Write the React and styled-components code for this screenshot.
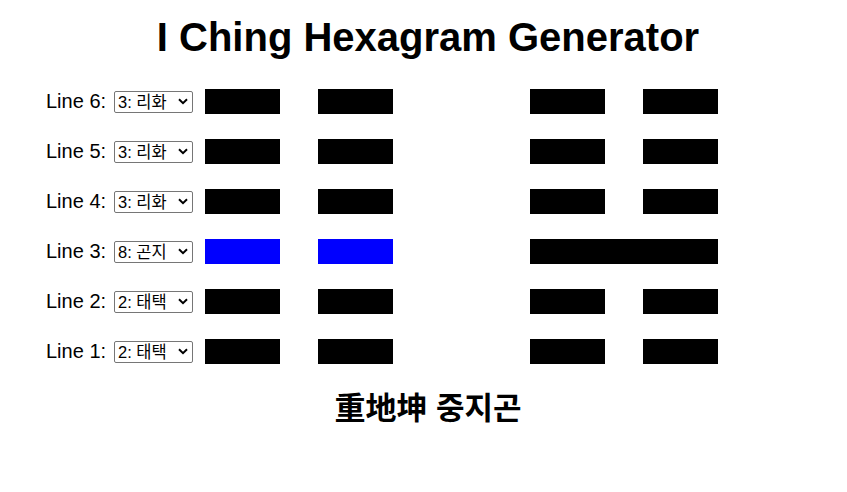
import React, { useState } from "react";
import styled, { createGlobalStyle } from "styled-components";

const Global = createGlobalStyle`
  html, body { margin: 0; padding: 0; background: #fff; }
  body { font-family: "Liberation Sans", Arial, "Noto Sans CJK KR", sans-serif; color: #000; }
`;

const chevron =
  "url(\"data:image/svg+xml;utf8,<svg xmlns='http://www.w3.org/2000/svg' width='10' height='7' viewBox='0 0 10 7'><path d='M1 1.2 L5 5.2 L9 1.2' fill='none' stroke='black' stroke-width='2'/></svg>\")";

const Page = styled.div`
  width: 847px;
  display: flex;
  flex-direction: column;
`;

const Title = styled.h1`
  margin: 14px 0 0 9px;
  font-size: 40px;
  line-height: 46px;
  font-weight: bold;
  text-align: center;
`;

const Rows = styled.div`
  display: flex;
  flex-direction: column;
  gap: 25px;
  margin: 29px 0 0 46px;
`;

const Row = styled.div`
  display: flex;
  align-items: center;
  height: 25px;
`;

const Label = styled.label`
  width: 68px;
  font-size: 20px;
  line-height: 23px;
  white-space: nowrap;
`;

const Select = styled.select`
  appearance: none;
  -webkit-appearance: none;
  width: 79px;
  height: 22px;
  font-family: "Liberation Sans", Arial, "Noto Sans CJK KR", sans-serif;
  font-size: 16.5px;
  line-height: 20px;
  padding: 0 0 0 3px;
  border: 1px solid #767676;
  border-radius: 2px;
  background: #fff ${chevron} no-repeat right 4px center / 10px 7px;
  color: #000;
  margin: 0 12px 0 0;
`;

const Hexagram = styled.div`
  display: flex;
  width: 188px;
  height: 25px;
  justify-content: space-between;
  margin-right: ${(p) => p.$gapRight || 0}px;
`;

const Bar = styled.div`
  height: 25px;
  width: ${(p) => (p.$solid ? 188 : 75)}px;
  background: ${(p) => (p.$changing ? "#0000ff" : "#000")};
`;

const Name = styled.h2`
  margin: 27px 0 0 9px;
  font-size: 31px;
  line-height: 36px;
  font-weight: bold;
  text-align: center;
  font-family: "Liberation Sans", Arial, "Noto Sans CJK KR", sans-serif;
`;

const trigramOptions = [
  "1: 건천",
  "2: 태택",
  "3: 리화",
  "4: 진뢰",
  "5: 손풍",
  "6: 감수",
  "7: 간산",
  "8: 곤지",
];

const initial = [
  { n: 6, v: "3: 리화", changing: false, solid: false },
  { n: 5, v: "3: 리화", changing: false, solid: false },
  { n: 4, v: "3: 리화", changing: false, solid: false },
  { n: 3, v: "8: 곤지", changing: true, solid: true },
  { n: 2, v: "2: 태택", changing: false, solid: false },
  { n: 1, v: "2: 태택", changing: false, solid: false },
];

function Line({ solid, changing }) {
  if (solid) {
    return (
      <Hexagram>
        <Bar $solid $changing={changing} />
      </Hexagram>
    );
  }
  return (
    <Hexagram>
      <Bar $changing={changing} />
      <Bar $changing={changing} />
    </Hexagram>
  );
}

export default function App() {
  const [lines, setLines] = useState(initial);
  const change = (i, v) =>
    setLines((ls) => ls.map((l, j) => (j === i ? { ...l, v } : l)));
  return (
    <Page>
      <Global />
      <Title>I Ching Hexagram Generator</Title>
      <Rows>
        {lines.map((l, i) => (
          <Row key={l.n}>
            <Label htmlFor={`line-${l.n}`}>Line {l.n}:</Label>
            <Select
              id={`line-${l.n}`}
              value={l.v}
              onChange={(e) => change(i, e.target.value)}
            >
              {trigramOptions.map((o) => (
                <option key={o} value={o}>
                  {o}
                </option>
              ))}
            </Select>
            <Hexagram $gapRight={137}>
              <Bar $changing={l.changing} />
              <Bar $changing={l.changing} />
            </Hexagram>
            <Line solid={l.solid} changing={false} />
          </Row>
        ))}
      </Rows>
      <Name>重地坤 중지곤</Name>
    </Page>
  );
}
